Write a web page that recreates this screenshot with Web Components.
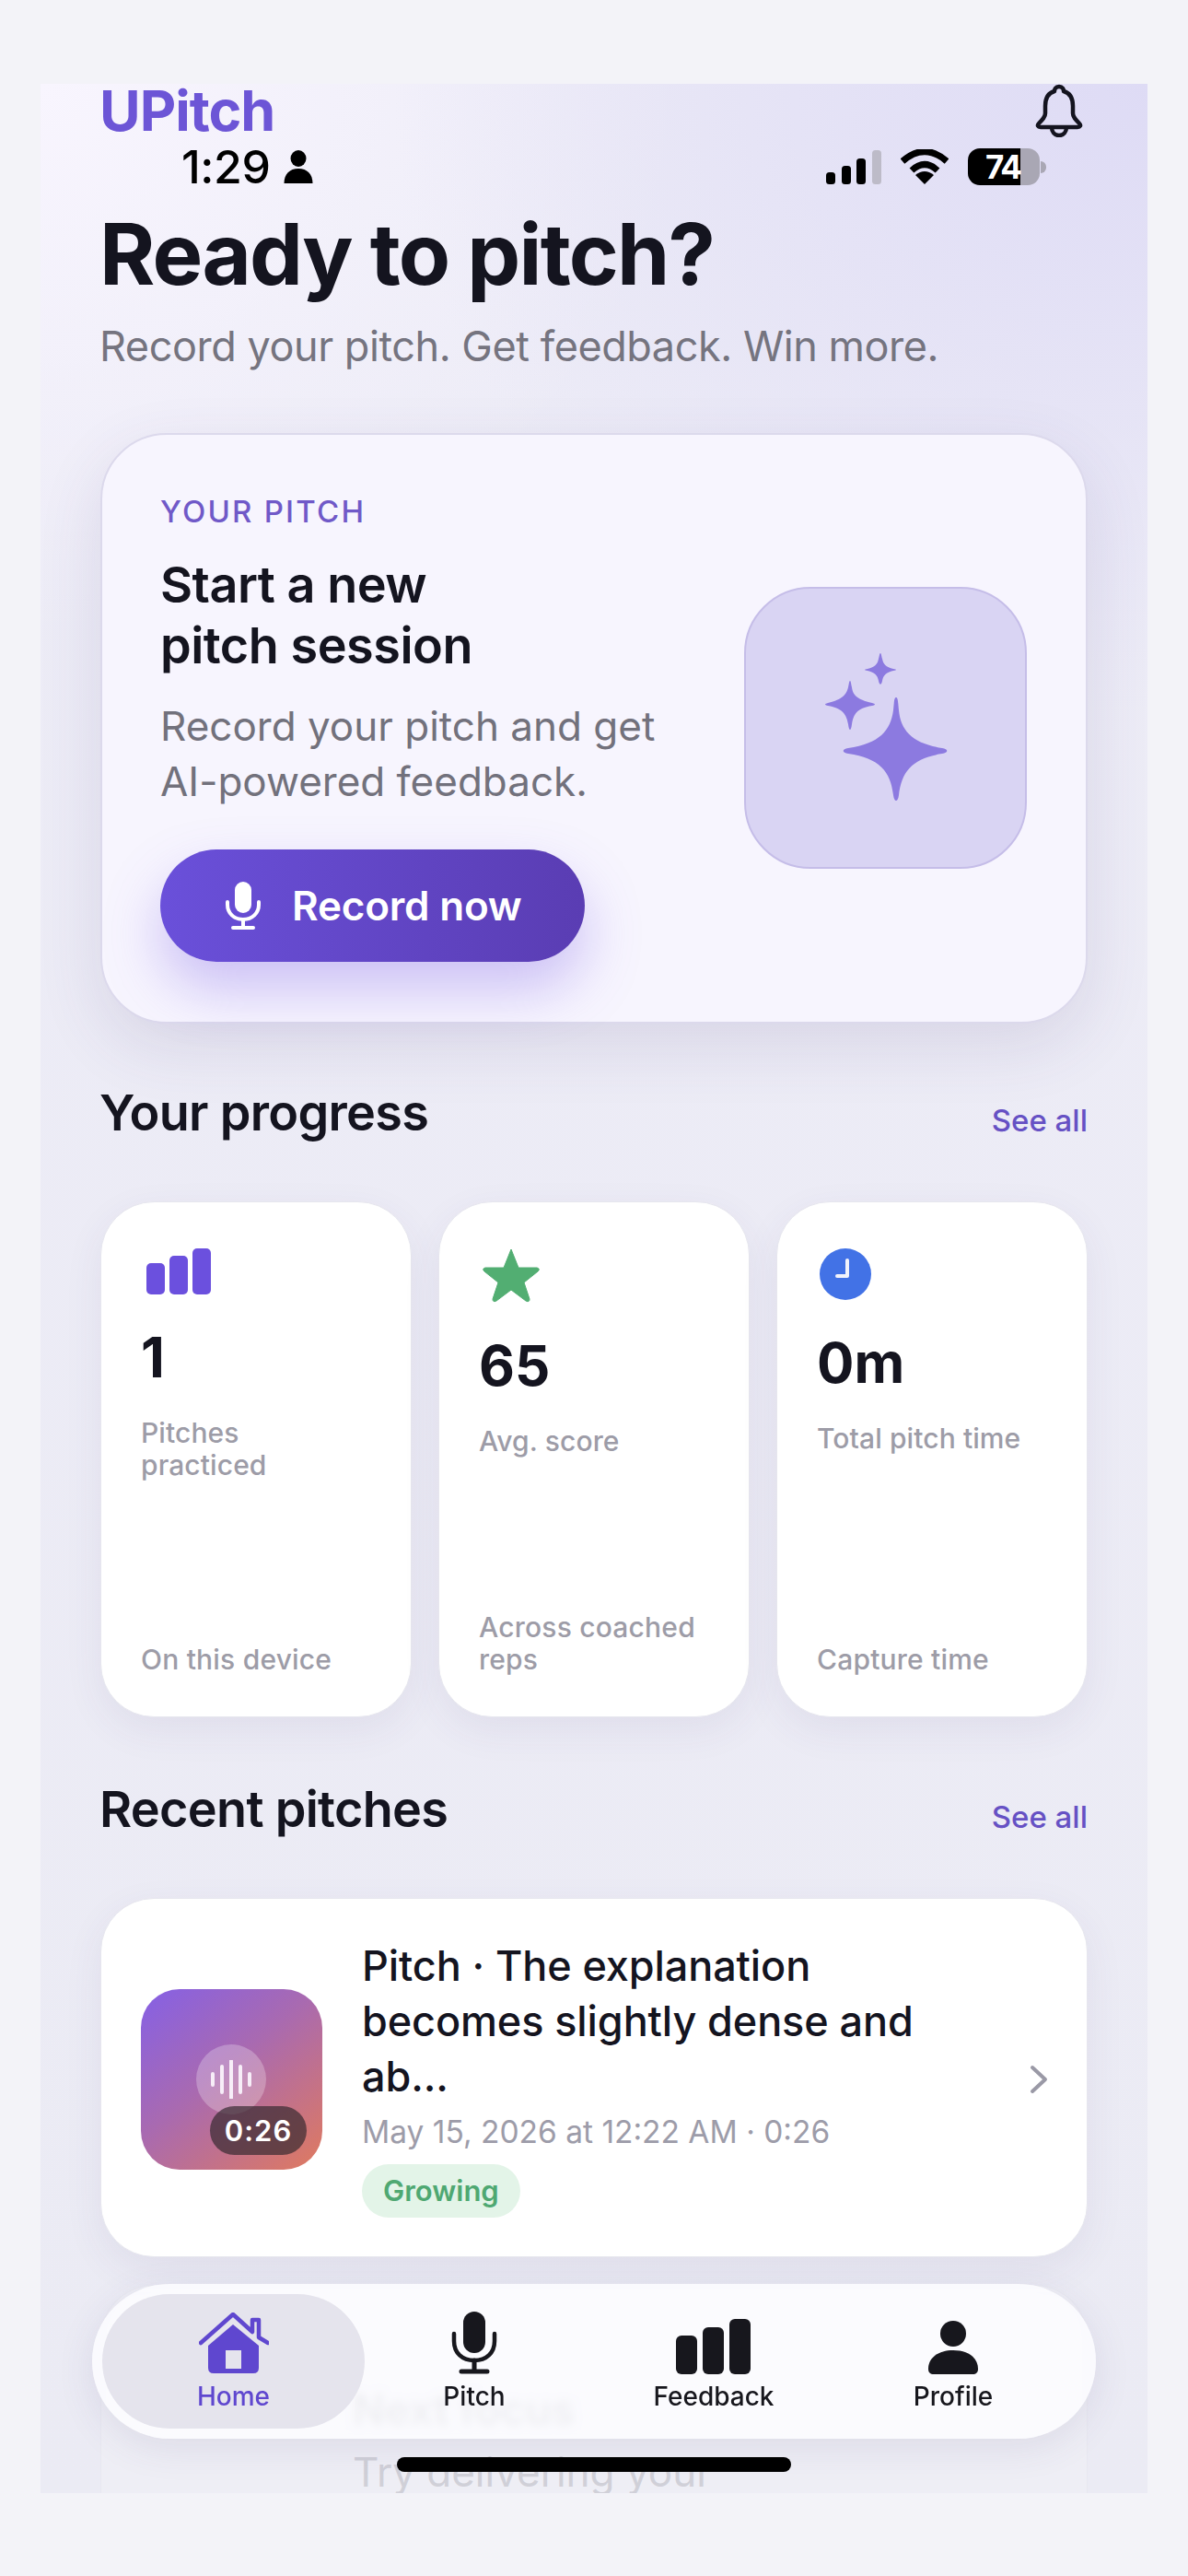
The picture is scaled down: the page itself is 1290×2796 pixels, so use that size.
<!DOCTYPE html>
<html lang="en">
<head>
<meta charset="utf-8">
<title>UPitch</title>
<style>
  html, body { margin: 0; background: #f3f3f8; }
  body { font-family: Inter, "Liberation Sans", sans-serif; color: #14141f; }
</style>
</head>
<body>
<app-screen>
  <status-bar slot="over"></status-bar>
  <app-header></app-header>
  <hero-card></hero-card>
  <section-head title="Your progress" style="margin-top:62px"></section-head>
  <stat-row>
    <stat-card value="1" label="Pitches practiced" foot="On this device">
      <svg slot="icon" style="margin-left:5px" width="72" height="50" viewBox="0 0 72 50"><rect x="1" y="16" width="20" height="34" rx="5" fill="#6b50de"/><rect x="26" y="8" width="20" height="42" rx="5" fill="#6b50de"/><rect x="51" y="0" width="20" height="50" rx="5" fill="#6b50de"/></svg>
    </stat-card>
    <stat-card value="65" label="Avg. score" foot="Across coached reps">
      <svg slot="icon" style="margin-left:3px" width="64" height="59" viewBox="0 0 64 59"><path d="M32 1 40 21 60 21Q64 22 61 25L46 37 52 55Q52 59 48 57L32 45 16 57Q12 59 12 55L18 37 3 25Q0 22 4 21L24 21Z" fill="#52ae72" stroke="#52ae72" stroke-linejoin="round"/></svg>
    </stat-card>
    <stat-card value="0m" label="Total pitch time" foot="Capture time">
      <svg slot="icon" style="margin-left:3px" width="56" height="56" viewBox="0 0 56 56"><circle cx="28" cy="28" r="28" fill="#4272e6"/><path d="M30 13V30H19" fill="none" stroke="#f2f3fb" stroke-width="4" stroke-linecap="round" stroke-linejoin="round"/></svg>
    </stat-card>
  </stat-row>
  <section-head title="Recent pitches" style="margin-top:65px"></section-head>
  <pitch-card
    title="Pitch · The explanation becomes slightly dense and ab..."
    meta="May 15, 2026 at 12:22 AM · 0:26"
    time="0:26"
    tag="Growing"></pitch-card>
  <focus-card></focus-card>
  <tab-bar slot="over"></tab-bar>
</app-screen>

<script>
class AppScreen extends HTMLElement {
  connectedCallback() {
    this.attachShadow({ mode: "open" });
    this.shadowRoot.innerHTML = `
      <style>
        :host {
          display: block;
          position: relative;
          width: 1202px;
          height: 2615px;
          margin: 91px 0 0 44px;
          background:
            radial-gradient(820px 680px at 100% 0, #dedbf5 0%, rgba(222,219,245,0) 100%),
            radial-gradient(700px 600px at 0 0, #f8f5fe 0%, rgba(248,245,254,0) 100%),
            linear-gradient(180deg, #edecf7 0%, #ebebf4 100%);
        }
        .flow { display: flex; flex-direction: column; padding: 0 65px; }
      </style>
      <div class="flow"><slot></slot></div>
      <slot name="over"></slot>
    `;
  }
}

class StatusBar extends HTMLElement {
  connectedCallback() {
    this.attachShadow({ mode: "open" });
    this.shadowRoot.innerHTML = `
      <style>
        :host {
          position: absolute;
          left: 0;
          right: 0;
          top: 65px;
          height: 50px;
          display: flex;
          justify-content: space-between;
          align-items: center;
          padding: 0 110px 0 153px;
          color: #000;
        }
        .side { display: flex; align-items: center; }
        .time { font: 500 50px/50px Inter, sans-serif; letter-spacing: -.4px; }
        .user { margin-left: 13px; }
        .batt {
          width: 78px;
          height: 40px;
          margin-left: 21px;
          border-radius: 13px;
          overflow: hidden;
          background: linear-gradient(90deg, #000 73%, #a9a7b4 73%);
          color: #fff;
          font: 700 35px/40px Inter, sans-serif;
          letter-spacing: -2px;
          text-align: center;
          padding-right: 2px;
          box-sizing: border-box;
        }
        .tip { width: 6px; height: 13px; margin-left: 1px; background: #a9a7b4; border-radius: 0 6px 6px 0; }
        .wifi { margin-left: 21px; }
      </style>
      <div class="side">
        <span class="time">1:29</span>
        <svg class="user" width="34" height="36" viewBox="0 0 33 36"><ellipse cx="16.5" cy="9" rx="8.5" ry="9" fill="#000"/><path d="M1 36C1 26 7 20 16.5 20S32 26 32 36Z" fill="#000"/></svg>
      </div>
      <div class="side">
        <svg width="60" height="37" viewBox="0 0 60 37"><rect x="0" y="24" width="10" height="13" rx="3.5" fill="#000"/><rect x="17" y="17" width="10" height="20" rx="3.5" fill="#000"/><rect x="33" y="9" width="10" height="28" rx="3.5" fill="#000"/><rect x="50" y="0" width="10" height="37" rx="3.5" fill="#bdbbc8"/></svg>
        <svg class="wifi" width="52" height="38" viewBox="0 0 52 38"><path d="M2 13Q26 -8 50 13" fill="none" stroke="#000" stroke-width="7"/><path d="M12 23Q26 10 40 23" fill="none" stroke="#000" stroke-width="7"/><path d="M16 28Q26 20 36 28L26 38Z" fill="#000"/></svg>
        <div class="batt">74</div>
        <div class="tip"></div>
      </div>
    `;
  }
}

class AppHeader extends HTMLElement {
  connectedCallback() {
    this.attachShadow({ mode: "open" });
    this.shadowRoot.innerHTML = `
      <style>
        :host { display: block; margin-left: -1px; }
        .top { display: flex; justify-content: space-between; align-items: flex-start; height: 62px; }
        .logo { font: 700 61px/58px Inter, sans-serif; color: #6c55d6; letter-spacing: -1px; }
        .bell { margin-right: 5px; }
        h1 { margin: 67px 0 0; font: 700 92px/112px Inter, sans-serif; letter-spacing: -1.8px; color: #14141f; }
        p { margin: 14px 0 0; font: 400 45px/60px Inter, sans-serif; letter-spacing: -.45px; color: #75747f; }
      </style>
      <div class="top">
        <div class="logo">UPitch</div>
        <svg class="bell" width="52" height="58" viewBox="0 0 52 58"><path d="M26 3C30 3 31 6 31 8 38 10 41 16 41 24V32C41 36 44 39 48 43 50 45 49 47 46 47H6C3 47 2 45 4 43 8 39 11 36 11 32V24C11 16 14 10 21 8 21 6 22 3 26 3Z" fill="none" stroke="#14141f" stroke-width="4.5" stroke-linejoin="round"/><path d="M18 47C18 52 21 56 26 56S34 52 34 47" fill="none" stroke="#14141f" stroke-width="4.5"/></svg>
      </div>
      <h1>Ready to pitch?</h1>
      <p>Record your pitch. Get feedback. Win more.</p>
    `;
  }
}

class HeroCard extends HTMLElement {
  connectedCallback() {
    this.attachShadow({ mode: "open" });
    this.shadowRoot.innerHTML = `
      <style>
        :host {
          display: flex;
          justify-content: space-between;
          align-items: center;
          box-sizing: border-box;
          height: 641px;
          margin-top: 64px;
          padding: 0 64px 0 63px;
          background: #f7f5fe;
          border: 2px solid #dcd9ec;
          border-radius: 72px;
          box-shadow: 0 24px 70px rgba(70, 60, 120, .12);
        }
        .copy { margin-top: -2px; }
        .eyebrow { font: 500 33px/40px Inter, sans-serif; letter-spacing: 2.2px; color: #7059c8; }
        h2 { margin: 27px 0 0; font: 600 54px/66px Inter, sans-serif; letter-spacing: -.5px; color: #14141f; }
        p { margin: 24px 0 0; font: 400 44px/60px Inter, sans-serif; color: #72717c; }
        .btn {
          display: inline-flex;
          align-items: center;
          gap: 34px;
          box-sizing: border-box;
          width: 461px;
          height: 122px;
          margin-top: 44px;
          padding-left: 71px;
          border-radius: 61px;
          background: linear-gradient(90deg, #6a50da, #5a3db3);
          box-shadow: 0 30px 60px rgba(120, 90, 230, .34);
          color: #fff;
          font: 600 44px/1 Inter, sans-serif;
          letter-spacing: -.2px;
        }
        .art {
          display: flex;
          align-items: center;
          justify-content: center;
          width: 307px;
          height: 306px;
          margin-top: -2px;
          box-sizing: border-box;
          border: 2px solid #c5bde8;
          border-radius: 72px;
          background: #d9d4f3;
        }
      </style>
      <div class="copy">
        <div class="eyebrow">YOUR PITCH</div>
        <h2>Start a new<br>pitch session</h2>
        <p>Record your pitch and get<br>AI-powered feedback.</p>
        <div class="btn">
          <svg width="38" height="52" viewBox="0 0 38 52"><rect x="10" y="0" width="18" height="34" rx="9" fill="#fff"/><path d="M2 22V25C2 34 9 41 19 41S36 34 36 25V22" fill="none" stroke="#fff" stroke-width="4" stroke-linecap="round"/><path d="M19 41V49M8 50H30" fill="none" stroke="#fff" stroke-width="4" stroke-linecap="round"/></svg>
          <span>Record now</span>
        </div>
      </div>
      <div class="art">
        <svg width="134" height="162" viewBox="0 0 134 162" fill="#8c7ae0">
          <path d="M78 48C80 48 80 52 81 62 83 84 96 98 128 103 135 104 135 108 128 109 96 114 84 128 81 154 80 162 76 162 75 154 72 128 60 114 26 109 19 108 19 104 26 103 60 98 72 84 75 62 76 52 76 48 78 48Z"/>
          <path d="M28 30C29 30 29 33 30 37 31 45 35 50 52 54 56 55 56 56 52 57 35 60 32 66 30 77 29 85 27 85 26 77 24 66 20 60 4 57 0 56 0 55 4 54 20 50 24 45 26 37 27 33 27 30 28 30Z"/>
          <path d="M61 0C62 0 62 3 63 6 64 12 67 15 75 17 79 18 79 18 75 19 67 21 64 24 63 30 62 35 60 35 59 30 58 24 55 21 47 19 43 18 43 18 47 17 55 15 58 12 59 6 60 3 60 0 61 0Z"/>
        </svg>
      </div>
    `;
  }
}

class SectionHead extends HTMLElement {
  connectedCallback() {
    this.attachShadow({ mode: "open" });
    this.shadowRoot.innerHTML = `
      <style>
        :host { display: flex; justify-content: space-between; align-items: baseline; height: 70px; }
        .title { font: 600 54px/70px Inter, sans-serif; letter-spacing: -.7px; color: #14141f; margin-left: -1px; }
        .link { font: 500 33px/40px Inter, sans-serif; color: #6651c4; position: relative; top: 1px; }
      </style>
      <span class="title">${this.getAttribute("title")}</span>
      <span class="link">See all</span>
    `;
  }
}

class StatRow extends HTMLElement {
  connectedCallback() {
    this.attachShadow({ mode: "open" });
    this.shadowRoot.innerHTML = `
      <style>
        :host { display: grid; grid-template-columns: repeat(3, 338px); gap: 29px; margin-top: 61px; }
      </style>
      <slot></slot>
    `;
  }
}

class StatCard extends HTMLElement {
  connectedCallback() {
    this.attachShadow({ mode: "open" });
    this.shadowRoot.innerHTML = `
      <style>
        :host {
          display: flex;
          flex-direction: column;
          box-sizing: border-box;
          height: 560px;
          padding: 50px 49px 44px 43px;
          background: #fff;
          border: 1px solid #e6e6ee;
          border-radius: 58px;
          box-shadow: 0 14px 44px rgba(70, 60, 120, .07);
        }
        .icon { line-height: 0; }
        .value { margin-top: 32px; font: 700 60px/72px Inter, sans-serif; color: #14141f; }
        .label { margin-top: 29px; font: 500 30px/35px Inter, sans-serif; letter-spacing: .1px; color: #9d9ca7; }
        .foot { margin-top: auto; font: 500 30px/35px Inter, sans-serif; letter-spacing: .2px; color: #9d9ca7; }
      </style>
      <div class="icon"><slot name="icon"></slot></div>
      <div class="value">${this.getAttribute("value")}</div>
      <div class="label">${this.getAttribute("label")}</div>
      <div class="foot">${this.getAttribute("foot")}</div>
    `;
  }
}

class PitchCard extends HTMLElement {
  connectedCallback() {
    this.attachShadow({ mode: "open" });
    this.shadowRoot.innerHTML = `
      <style>
        :host {
          display: flex;
          align-items: center;
          box-sizing: border-box;
          height: 390px;
          margin-top: 61px;
          padding: 0 41px 0 43px;
          background: #fff;
          border: 1px solid #e6e6ee;
          border-radius: 58px;
          box-shadow: 0 14px 44px rgba(70, 60, 120, .07);
        }
        .thumb {
          position: relative;
          flex: none;
          width: 197px;
          height: 196px;
          margin-top: 4px;
          border-radius: 42px;
          background: linear-gradient(140deg, #8560e6 0%, #a96ab0 45%, #e07a5e 100%);
        }
        .wave {
          position: absolute;
          left: 60px;
          top: 60px;
          width: 76px;
          height: 76px;
          border-radius: 50%;
          background: rgba(255, 255, 255, .26);
          display: flex;
          align-items: center;
          justify-content: center;
        }
        .time {
          position: absolute;
          left: 75px;
          top: 127px;
          width: 105px;
          height: 53px;
          border-radius: 27px;
          background: rgba(50, 40, 45, .68);
          color: #fff;
          font: 600 31px/53px Inter, sans-serif;
          letter-spacing: 1px;
          text-align: center;
        }
        .body { flex: 1; margin-left: 43px; }
        .title { width: 620px; font: 500 45px/60px Inter, sans-serif; letter-spacing: -.1px; color: #14141f; }
        .meta { margin-top: 9px; font: 400 33.5px/42px Inter, sans-serif; color: #9d9ca9; }
        .tag {
          display: inline-block;
          margin-top: 14px;
          padding: 0 23px;
          height: 58px;
          border-radius: 29px;
          background: #e3f4e8;
          color: #4fa872;
          font: 600 31px/58px Inter, sans-serif;
        }
        svg.chev { flex: none; margin-top: 4px; }
      </style>
      <div class="thumb">
        <div class="wave">
          <svg width="46" height="42" viewBox="0 0 46 42" stroke="#f7eef8" stroke-width="4" stroke-linecap="round"><path d="M3 15V27M13 7V35M23 1V41M33 7V35M43 15V27"/></svg>
        </div>
        <div class="time">${this.getAttribute("time")}</div>
      </div>
      <div class="body">
        <div class="title">${this.getAttribute("title")}</div>
        <div class="meta">${this.getAttribute("meta")}</div>
        <span class="tag">${this.getAttribute("tag")}</span>
      </div>
      <svg class="chev" width="22" height="32" viewBox="0 0 22 32"><path d="M4 3 18 16 4 29" fill="none" stroke="#9a99a6" stroke-width="4" stroke-linecap="round" stroke-linejoin="round"/></svg>
    `;
  }
}

class FocusCard extends HTMLElement {
  connectedCallback() {
    this.attachShadow({ mode: "open" });
    this.shadowRoot.innerHTML = `
      <style>
        :host {
          display: block;
          box-sizing: border-box;
          height: 226px;
          margin-top: 30px;
          padding: 104px 0 0 273px;
          overflow: hidden;
          background: #eeeef5;
          border: 1px solid #e8e8f0;
          border-bottom: 0;
          border-radius: 58px 58px 0 0;
        }
        .title { font: 600 46px/60px Inter, sans-serif; color: #14141f; }
        .text { margin-top: 8px; font: 400 44px/60px Inter, sans-serif; color: #d0d0d8; }
      </style>
      <div class="title">Next focus</div>
      <div class="text">Try delivering your</div>
    `;
  }
}

class TabBar extends HTMLElement {
  connectedCallback() {
    this.attachShadow({ mode: "open" });
    this.shadowRoot.innerHTML = `
      <style>
        :host {
          position: absolute;
          left: 56px;
          top: 2388px;
          width: 1090px;
          height: 168px;
          box-sizing: border-box;
          padding: 11px 0 11px 25px;
          display: grid;
          grid-template-columns: repeat(4, 260px);
          border-radius: 84px;
          background: rgba(251, 251, 254, .95);
          backdrop-filter: blur(5px);
          box-shadow: 0 10px 40px rgba(70, 60, 120, .1);
        }
        .home {
          position: absolute;
          left: 331px;
          bottom: -36px;
          width: 428px;
          height: 16px;
          border-radius: 8px;
          background: #000;
        }
      </style>
      <tab-item label="Home" active>
        <svg width="76" height="67" viewBox="0 0 76 67"><path d="M2 33 37 2 58 21V8H65V27L75 33" fill="none" stroke="#5f47cf" stroke-width="4.5" stroke-linejoin="round" stroke-linecap="round"/><path d="M37 13 65 36V60Q65 66 59 66H16Q10 66 10 60V36Z" fill="#5f47cf"/><rect x="29" y="41" width="17" height="20" fill="#e5e4ed"/></svg>
      </tab-item>
      <tab-item label="Pitch">
        <svg width="50" height="68" viewBox="0 0 50 68"><rect x="13" y="0" width="24" height="45" rx="12" fill="#17171d"/><path d="M3 24V32C3 45 12 53 25 53S47 45 47 32V24" fill="none" stroke="#17171d" stroke-width="4.5" stroke-linecap="round"/><path d="M25 53V64M11 65H39" fill="none" stroke="#17171d" stroke-width="5" stroke-linecap="round"/></svg>
      </tab-item>
      <tab-item label="Feedback">
        <svg width="82" height="60" viewBox="0 0 82 60" fill="#17171d"><rect x="0" y="18" width="23" height="42" rx="6"/><rect x="29" y="9" width="23" height="51" rx="6"/><rect x="58" y="0" width="23" height="60" rx="6"/></svg>
      </tab-item>
      <tab-item label="Profile">
        <svg width="54" height="58" viewBox="0 0 54 58" fill="#17171d"><ellipse cx="27" cy="14" rx="14" ry="14"/><path d="M0 52C0 40 11 32 27 32S54 40 54 52C54 56 52 58 48 58H6C2 58 0 56 0 52Z"/></svg>
      </tab-item>
      <div class="home"></div>
    `;
  }
}

class TabItem extends HTMLElement {
  connectedCallback() {
    this.attachShadow({ mode: "open" });
    const active = this.hasAttribute("active");
    this.shadowRoot.innerHTML = `
      <style>
        :host {
          display: flex;
          flex-direction: column;
          align-items: center;
          height: 146px;
          padding-top: 17px;
          box-sizing: border-box;
          border-radius: 73px;
        }
        :host([active]) { margin: 0 -11px 0 -14px; background: #e5e4ed; }
        .icon { height: 70px; display: flex; align-items: flex-end; line-height: 0; }
        .label {
          margin-top: 6px;
          font: 500 28px/36px Inter, sans-serif;
          color: ${active ? "#5f47cf" : "#17171d"};
        }
      </style>
      <div class="icon"><slot></slot></div>
      <div class="label">${this.getAttribute("label")}</div>
    `;
  }
}

customElements.define("app-screen", AppScreen);
customElements.define("status-bar", StatusBar);
customElements.define("app-header", AppHeader);
customElements.define("hero-card", HeroCard);
customElements.define("section-head", SectionHead);
customElements.define("stat-row", StatRow);
customElements.define("stat-card", StatCard);
customElements.define("pitch-card", PitchCard);
customElements.define("focus-card", FocusCard);
customElements.define("tab-bar", TabBar);
customElements.define("tab-item", TabItem);
</script>
</body>
</html>
